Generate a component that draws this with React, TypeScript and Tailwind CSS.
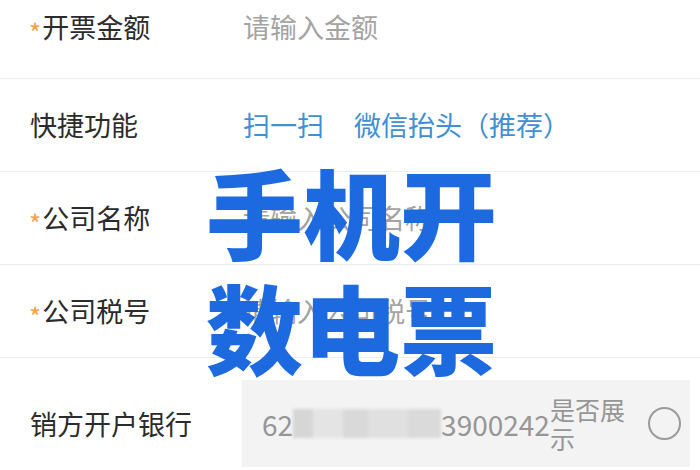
import React from 'react';

const FONT = { fontFamily: '"Noto Sans CJK SC", "Noto Sans", sans-serif' };

function Star() {
    return <span className="text-[#f0a046] text-[26px] leading-none mr-[1px] relative top-[5px]">*</span>;
}

function Row({ label, required, extra, children }: { label: string; required?: boolean; extra?: string; children?: React.ReactNode }) {
    return (
        <div className={`flex items-center h-[93px] border-b border-[#ececec] ${extra ?? ''}`}>
            <div className={`w-[243px] flex items-center text-[27px] text-[#2b2b2b] ${required ? 'pl-[29px]' : 'pl-[30px]'}`}>
                {required && <Star />}
                <span>{label}</span>
            </div>
            <div className="flex-1 flex items-center text-[27px]">{children}</div>
        </div>
    );
}

export default function App() {
    return (
        <div className="relative w-[700px] h-[470px] overflow-hidden bg-white" style={FONT}>
            <div className="-mt-[14px]">
                <Row label="开票金额" required extra="pb-[10px]">
                    <span className="text-[#a3a3a3]">请输入金额</span>
                </Row>
                <Row label="快捷功能">
                    <span className="text-[#3f8fd2]">扫一扫</span>
                    <span className="text-[#3f8fd2] ml-[30px]">微信抬头（推荐）</span>
                </Row>
                <Row label="公司名称" required>
                    <span className="text-[#a3a3a3]">请输入公司名称</span>
                </Row>
                <Row label="公司税号" required>
                    <span className="text-[#a3a3a3]">请输入公司税号</span>
                </Row>
                <div className="flex items-start pt-[22px]">
                    <div className="w-[242px] pl-[30px] pt-[24px] text-[27px] text-[#2b2b2b]">销方开户银行</div>
                    <div className="w-[448px] h-[87px] bg-[#f3f3f3] flex items-center pl-[20px]">
                        <div className="flex items-center text-[28px] text-[#969696]">
                            <span>62</span>
                            <span className="w-[148px] h-[29px] bg-[#e2e2e2] blur-[1.5px] flex">
                                <span className="w-[20px] h-full bg-[#d6d6d6]" />
                                <span className="w-[30px] h-full bg-[#e4e4e4]" />
                                <span className="w-[25px] h-full bg-[#d9d9d9]" />
                                <span className="w-[40px] h-full bg-[#e0e0e0]" />
                                <span className="w-[33px] h-full bg-[#dadada]" />
                            </span>
                            <span>3900242</span>
                        </div>
                        <div className="w-[78px] text-[25px] leading-[29px] text-[#969696]">是否展示</div>
                        <div className="ml-[20px] w-[33px] h-[33px] rounded-full border-2 border-[#9a9a9a]" />
                    </div>
                </div>
            </div>
            <div className="absolute left-[206px] top-[152px] text-[97px] leading-[115px] font-black text-[#1d6ae0]">
                <div>手机开</div>
                <div>数电票</div>
            </div>
        </div>
    );
}
